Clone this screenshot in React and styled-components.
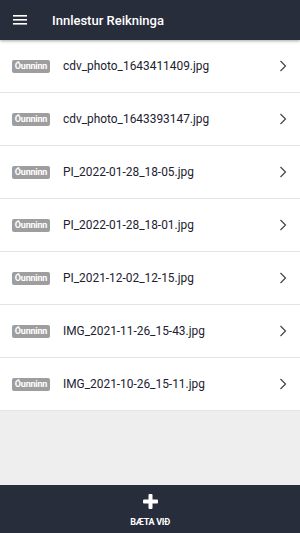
import React from "react";
import styled, { createGlobalStyle } from "styled-components";

const Global = createGlobalStyle`
  html, body { margin: 0; padding: 0; height: 100%; }
  body { font-family: Roboto, "Noto Sans", Arial, sans-serif; background: #eeeeee; }
  #root { height: 100%; }
`;

const Screen = styled.div`
  width: 300px;
  height: 533px;
  display: flex;
  flex-direction: column;
  background: #eeeeee;
  overflow: hidden;
`;

const Header = styled.header`
  height: 40px;
  flex: 0 0 40px;
  background: #282d3b;
  display: flex;
  align-items: center;
  padding-left: 13px;
  gap: 25px;
  box-shadow: 0 1px 3px rgba(0,0,0,0.35);
  position: relative;
  z-index: 1;
`;

const Title = styled.h1`
  margin: 0;
  color: #ffffff;
  font-size: 13px;
  font-weight: 500;
  letter-spacing: 0;
`;

const List = styled.main`
  flex: 1;
  display: flex;
  flex-direction: column;
`;

const Row = styled.div`
  height: 52px;
  background: #ffffff;
  border-bottom: 1px solid #e4e4e4;
  display: flex;
  align-items: center;
  padding: 0 13px 0 12px;
`;

const Badge = styled.span`
  background: #9e9e9e;
  color: #ffffff;
  font-size: 9px;
  font-weight: 700;
  line-height: 13px;
  height: 13px;
  padding: 0 2px;
  border-radius: 2px;
  width: 38px;
  box-sizing: border-box;
  text-align: center;
  letter-spacing: -0.2px;
`;

const FileName = styled.span`
  margin-left: 13px;
  flex: 1;
  font-size: 11.9px;
  color: #1c2230;
`;

const Footer = styled.footer`
  height: 48px;
  flex: 0 0 48px;
  background: #282d3b;
  display: flex;
  flex-direction: column;
  align-items: center;
  justify-content: center;
  gap: 8px;
  padding-top: 3px;
  box-sizing: border-box;
  color: #ffffff;
`;

const FooterLabel = styled.span`
  font-size: 9px;
  font-weight: 700;
  letter-spacing: -0.3px;
  line-height: 10px;
`;

const Menu = () => (
  <svg width="14" height="10" viewBox="0 0 14 10">
    <rect x="0" y="0" width="14" height="1.6" fill="#fff" />
    <rect x="0" y="4" width="14" height="1.6" fill="#fff" />
    <rect x="0" y="8" width="14" height="1.6" fill="#fff" />
  </svg>
);

const Chevron = () => (
  <svg width="8" height="12" viewBox="0 0 8 12">
    <path d="M1.5 1 L6.5 6 L1.5 11" stroke="#444" strokeWidth="1.2" fill="none" />
  </svg>
);

const Plus = () => (
  <svg width="15" height="15" viewBox="0 0 15 15">
    <rect x="5.5" y="0" width="4" height="15" rx="1" fill="#fff" />
    <rect x="0" y="5.5" width="15" height="4" rx="1" fill="#fff" />
  </svg>
);

const files = [
  "cdv_photo_1643411409.jpg",
  "cdv_photo_1643393147.jpg",
  "PI_2022-01-28_18-05.jpg",
  "PI_2022-01-28_18-01.jpg",
  "PI_2021-12-02_12-15.jpg",
  "IMG_2021-11-26_15-43.jpg",
  "IMG_2021-10-26_15-11.jpg",
];

export default function App() {
  return (
    <>
      <Global />
      <Screen>
        <Header>
          <Menu />
          <Title>Innlestur Reikninga</Title>
        </Header>
        <List>
          {files.map((f) => (
            <Row key={f}>
              <Badge>Óunninn</Badge>
              <FileName>{f}</FileName>
              <Chevron />
            </Row>
          ))}
        </List>
        <Footer>
          <Plus />
          <FooterLabel>BÆTA VIÐ</FooterLabel>
        </Footer>
      </Screen>
    </>
  );
}
